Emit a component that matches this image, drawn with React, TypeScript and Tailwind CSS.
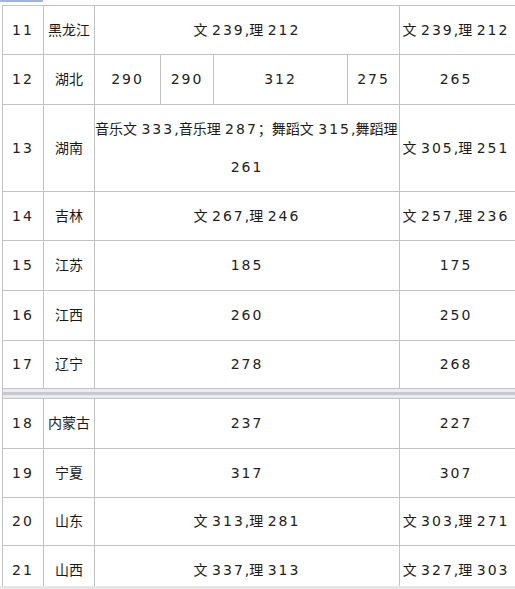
import React from "react";

const font = {
  fontFamily: '"DejaVu Sans", "Noto Sans CJK SC", sans-serif',
};

function fmt(s: string): React.ReactNode {
  return s.split(/(\d+)/).map((part, i) =>
    /^\d+$/.test(part) ? (
      <span key={i} className="text-[14px] tracking-[2px] text-[#222]">
        {part}
      </span>
    ) : (
      <span key={i}>{part}</span>
    )
  );
}

type Cell = { t: React.ReactNode; span?: number };
type Row = { n: string; p: string; cells: Cell[]; h: number };

const top: Row[] = [
  { n: "11", p: "黑龙江", h: 49, cells: [{ t: fmt("文 239,理 212"), span: 4 }, { t: fmt("文 239,理 212") }] },
  {
    n: "12",
    p: "湖北",
    h: 50,
    cells: [{ t: fmt("290") }, { t: fmt("290") }, { t: fmt("312") }, { t: fmt("275") }, { t: fmt("265") }],
  },
  {
    n: "13",
    p: "湖南",
    h: 87,
    cells: [
      {
        t: (
          <div className="leading-[38px]">
            <div className="whitespace-nowrap text-left">{fmt("音乐文 333,音乐理 287；舞蹈文 315,舞蹈理")}</div>
            <div>{fmt("261")}</div>
          </div>
        ),
        span: 4,
      },
      { t: fmt("文 305,理 251") },
    ],
  },
  { n: "14", p: "吉林", h: 49, cells: [{ t: fmt("文 267,理 246"), span: 4 }, { t: fmt("文 257,理 236") }] },
  { n: "15", p: "江苏", h: 50, cells: [{ t: fmt("185"), span: 4 }, { t: fmt("175") }] },
  { n: "16", p: "江西", h: 50, cells: [{ t: fmt("260"), span: 4 }, { t: fmt("250") }] },
  { n: "17", p: "辽宁", h: 48, cells: [{ t: fmt("278"), span: 4 }, { t: fmt("268") }] },
];

const bottom: Row[] = [
  { n: "18", p: "内蒙古", h: 50, cells: [{ t: fmt("237"), span: 4 }, { t: fmt("227") }] },
  { n: "19", p: "宁夏", h: 49, cells: [{ t: fmt("317"), span: 4 }, { t: fmt("307") }] },
  { n: "20", p: "山东", h: 48, cells: [{ t: fmt("文 313,理 281"), span: 4 }, { t: fmt("文 303,理 271") }] },
  { n: "21", p: "山西", h: 49, cells: [{ t: fmt("文 337,理 313"), span: 4 }, { t: fmt("文 327,理 303") }] },
];

function Table({ rows }: { rows: Row[] }) {
  return (
    <table className="table-fixed border-collapse w-[516px] text-[14px] text-[#1a1a1a]" style={font}>
      <colgroup>
        <col className="w-[41px]" />
        <col className="w-[51px]" />
        <col className="w-[66px]" />
        <col className="w-[53px]" />
        <col className="w-[134px]" />
        <col className="w-[52px]" />
        <col className="w-[119px]" />
      </colgroup>
      <tbody>
        {rows.map((r) => (
          <tr key={r.n}>
            <td className="border border-[#c3c3c3] text-center p-0" style={{ height: r.h }}>
              {fmt(r.n)}
            </td>
            <td className="border border-[#c3c3c3] text-center p-0">{r.p}</td>
            {r.cells.map((c, i) => (
              <td
                key={i}
                colSpan={c.span}
                className={
                  i === r.cells.length - 1
                    ? "border border-[#c3c3c3] text-center py-0 pl-0 pr-[6px] whitespace-nowrap"
                    : "border border-[#c3c3c3] text-center p-0"
                }
              >
                {c.t}
              </td>
            ))}
          </tr>
        ))}
      </tbody>
    </table>
  );
}

export default function App() {
  return (
    <div className="relative w-[515px] h-[589px] overflow-hidden bg-white">
      <div className="absolute left-0 top-0 w-[43px] h-[2px] bg-[#9db6de]" />
      <div className="pt-[5px] pl-[2px] w-[600px]">
        <Table rows={top} />
        <div className="w-[516px] h-[9px] border-l border-[#c3c3c3] bg-[#ececf0] flex flex-col justify-center">
          <div className="h-[3px] bg-[#c9c9d2]" />
        </div>
        <Table rows={bottom} />
      </div>
      <div className="absolute left-0 bottom-0 w-full h-[3px] bg-[#e6e6e6]" />
    </div>
  );
}
